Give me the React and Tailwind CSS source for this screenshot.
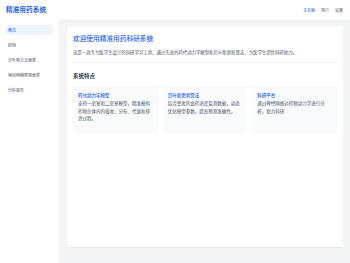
import React from 'react';

const navItems = ['概览', '药物', '贝叶斯方法更新', '神经网络预测更新', '分析报告'];

const features = [
  {
    title: '药代动力学模型',
    text: '支持一房室和二房室模型，精准模拟药物在体内的吸收、分布、代谢和排泄过程。',
  },
  {
    title: '贝叶斯更新算法',
    text: '结合患者的血药浓度监测数据，动态优化模型参数，提高预测准确性。',
  },
  {
    title: '科研平台',
    text: '通过神经网络对药物动力学进行分析，助力科研',
  },
];

export default function App() {
  return (
    <div
      className="w-[350px] h-[263px] bg-white flex flex-col overflow-hidden"
      style={{ fontFamily: '"Noto Sans CJK SC", "Noto Sans", sans-serif' }}
    >
      {/* Header */}
      <header className="h-[19px] shrink-0 flex items-center justify-between pl-[6px] pr-[7px] bg-white">
        <h1 className="text-[6.7px] leading-none font-bold text-[#2563eb]">精准用药系统</h1>
        <nav className="flex items-center gap-[6px] text-[4px] leading-none">
          <span className="text-[#2563eb]">主页面</span>
          <span className="text-gray-600">用户</span>
          <span className="text-gray-600">设置</span>
        </nav>
      </header>

      <div className="flex flex-1 min-h-0">
        {/* Sidebar */}
        <aside className="w-[60px] shrink-0 bg-white border-r border-[#eef0f3] pt-[6px] px-[6px] flex flex-col gap-[5px]">
          {navItems.map((item, i) => (
            <div
              key={item}
              className={`h-[10px] flex items-center px-[2px] text-[4px] leading-none rounded-[1px] ${
                i === 0 ? 'bg-[#eff5ff] text-[#2563eb]' : 'text-gray-600'
              }`}
            >
              {item}
            </div>
          ))}
        </aside>

        {/* Main */}
        <main className="flex-1 bg-[#f4f5f7] pt-[7px] pl-[7px] pr-[7px]">
          <div className="h-[221px] bg-white rounded-[2px] shadow-[0_0.5px_1px_rgba(0,0,0,0.06)] px-[6px] pt-[9px]">
            <h2 className="text-[6.7px] leading-none font-medium text-[#2563eb]">欢迎使用精准用药科研系统</h2>
            <p className="mt-[8px] text-[4.4px] leading-none text-gray-600">
              这是一款专为医学生设计的科研学习工具，通过先进的药代动力学模型和贝叶斯更新算法，为医学生提供科研助力。
            </p>
            <div className="mt-[8px] h-px bg-[#f0f1f3]" />
            <h3 className="mt-[11px] text-[5.5px] leading-none font-bold text-gray-700">系统特点</h3>
            <div className="mt-[6px] grid grid-cols-3 gap-[5px]">
              {features.map((f) => (
                <div key={f.title} className="h-[47px] bg-[#f8fafc] rounded-[2px] px-[5px] pt-[7px]">
                  <div className="text-[4.5px] leading-none font-medium text-[#2563eb]">{f.title}</div>
                  <p className="mt-[3px] text-[4.5px] leading-[7.5px] text-gray-600">{f.text}</p>
                </div>
              ))}
            </div>
          </div>
        </main>
      </div>
    </div>
  );
}
